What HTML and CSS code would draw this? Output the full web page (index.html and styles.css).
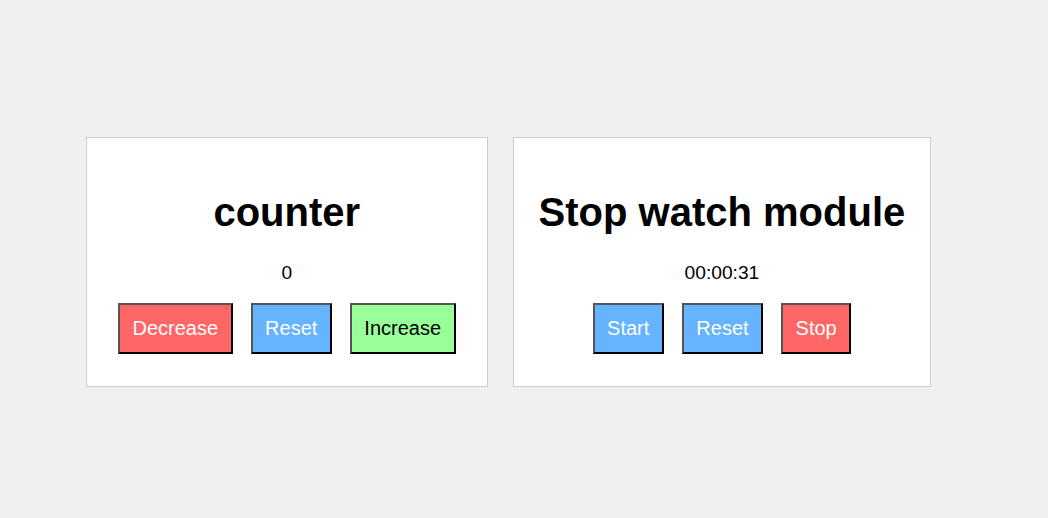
FILE: index.html
```html
<!DOCTYPE html>
<html>
<head>
<meta charset="utf-8">
<link rel="stylesheet" href="styles.css">
</head>
<body>
<div class="modules">
  <section class="card">
    <h1 class="title">counter</h1>
    <p class="value">0</p>
    <div class="actions">
      <button class="btn btn-red">Decrease</button>
      <button class="btn btn-blue">Reset</button>
      <button class="btn btn-green">Increase</button>
    </div>
  </section>
  <section class="card">
    <h1 class="title">Stop watch module</h1>
    <p class="value">00:00:31</p>
    <div class="actions">
      <button class="btn btn-blue">Start</button>
      <button class="btn btn-blue">Reset</button>
      <button class="btn btn-red">Stop</button>
    </div>
  </section>
</div>
</body>
</html>
```
FILE: styles.css
```css
html, body {
  margin: 0;
  padding: 0;
  background: #f0f0f0;
  font-family: "Liberation Sans", Arial, sans-serif;
  color: #000;
}
.modules {
  display: flex;
  align-items: flex-start;
  gap: 25px;
  padding: 137px 0 0 86px;
}
.card {
  background: #fff;
  border: 1px solid #cccccc;
  padding: 51px 25px 32px;
  text-align: center;
}
.title {
  margin: 0 0 27px;
  font-size: 40px;
  line-height: 46px;
  font-weight: bold;
  white-space: nowrap;
}
.value {
  margin: 0 0 19px;
  font-size: 19.2px;
  line-height: 22px;
}
.actions {
  display: flex;
  justify-content: center;
  gap: 18px;
  padding: 0 6px;
}
.btn {
  font-family: "Liberation Sans", Arial, sans-serif;
  font-size: 20px;
  line-height: 23px;
  padding: 12px 12.5px;
  border: 2px solid;
  border-color: #555555 #000000 #000000 #555555;
  border-radius: 0;
  color: #fff;
  cursor: pointer;
}
.btn-red { background: #ff6666; }
.btn-blue { background: #66b3ff; }
.btn-green { background: #99ff99; color: #000; }
```
